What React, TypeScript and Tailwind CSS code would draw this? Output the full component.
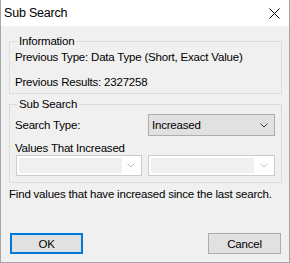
import React from "react";

const font = { fontFamily: '"Liberation Sans", Arial, sans-serif' };

function Chevron({ color }: { color: string }) {
  return (
    <svg width="8" height="5" viewBox="0 0 8 5" className="shrink-0">
      <path d="M0.5 0.5 L4 4 L7.5 0.5" fill="none" stroke={color} strokeWidth="1" />
    </svg>
  );
}

function DisabledCombo({ w }: { w: string }) {
  return (
    <div className={`${w} h-[21px] bg-white border border-[#cccccc] flex items-center pl-[2px] pr-[6px]`}>
      <div className="h-[15px] w-[103px] bg-[#f0f0f0]" />
      <div className="flex-1" />
      <Chevron color="#bfbfbf" />
    </div>
  );
}

export default function App() {
  return (
    <div
      className="w-[290px] h-[263px] bg-[#f0f0f0] flex flex-col text-[11.5px] tracking-[-0.2px] text-black border-x border-b border-[#a6a6a6] overflow-hidden"
      style={font}
    >
      <div className="shrink-0 h-[26px] bg-white flex items-center justify-between pl-[4px] pr-[10px] -mx-px">
        <span className="text-[12.5px] leading-[16px]">Sub Search</span>
        <svg width="11" height="11" viewBox="0 0 11 11">
          <path d="M0.5 0.5 L10.5 10.5 M10.5 0.5 L0.5 10.5" stroke="#000" strokeWidth="1" />
        </svg>
      </div>
      <div className="shrink-0 flex flex-col pl-[8px] pr-[7px]">
        <fieldset className="shrink-0 mt-[7px] border border-[#dcdcdc] pl-[5px] pb-[3px]">
          <legend className="ml-[2px] px-[2px] leading-[16px]">Information</legend>
          <div className="leading-[16px]">Previous Type: Data Type (Short, Exact Value)</div>
          <div className="leading-[16px] mt-[9px]">Previous Results: 2327258</div>
        </fieldset>
        <fieldset className="shrink-0 mt-[2px] border border-[#dcdcdc] pl-[5px] pr-[6px] pb-[6px]">
          <legend className="ml-[2px] px-[2px] leading-[16px]">Sub Search</legend>
          <div className="mt-[2px] flex items-center justify-between">
            <span className="leading-[16px]">Search Type:</span>
            <div className="w-[127px] h-[22px] bg-[#e1e1e1] border border-[#adadad] flex items-center justify-between pl-[3px] pr-[6px]">
              <span className="leading-[16px]">Increased</span>
              <Chevron color="#333333" />
            </div>
          </div>
          <div className="mt-[5px] leading-[14px]">Values That Increased</div>
          <div className="flex justify-between ml-[1px]">
            <DisabledCombo w="w-[126px]" />
            <DisabledCombo w="w-[127px]" />
          </div>
        </fieldset>
        <div className="shrink-0 mt-[3px] leading-[16px] whitespace-nowrap">Find values that have increased since the last search.</div>
        <div className="shrink-0 mt-[31px] flex justify-between px-[1px]">
          <button className="w-[73px] h-[21px] bg-[#e1e1e1] border-2 border-[#0078d7] flex items-center justify-center leading-[16px]">
            OK
          </button>
          <button className="w-[73px] h-[21px] bg-[#e1e1e1] border border-[#adadad] flex items-center justify-center leading-[16px]">
            Cancel
          </button>
        </div>
      </div>
    </div>
  );
}
